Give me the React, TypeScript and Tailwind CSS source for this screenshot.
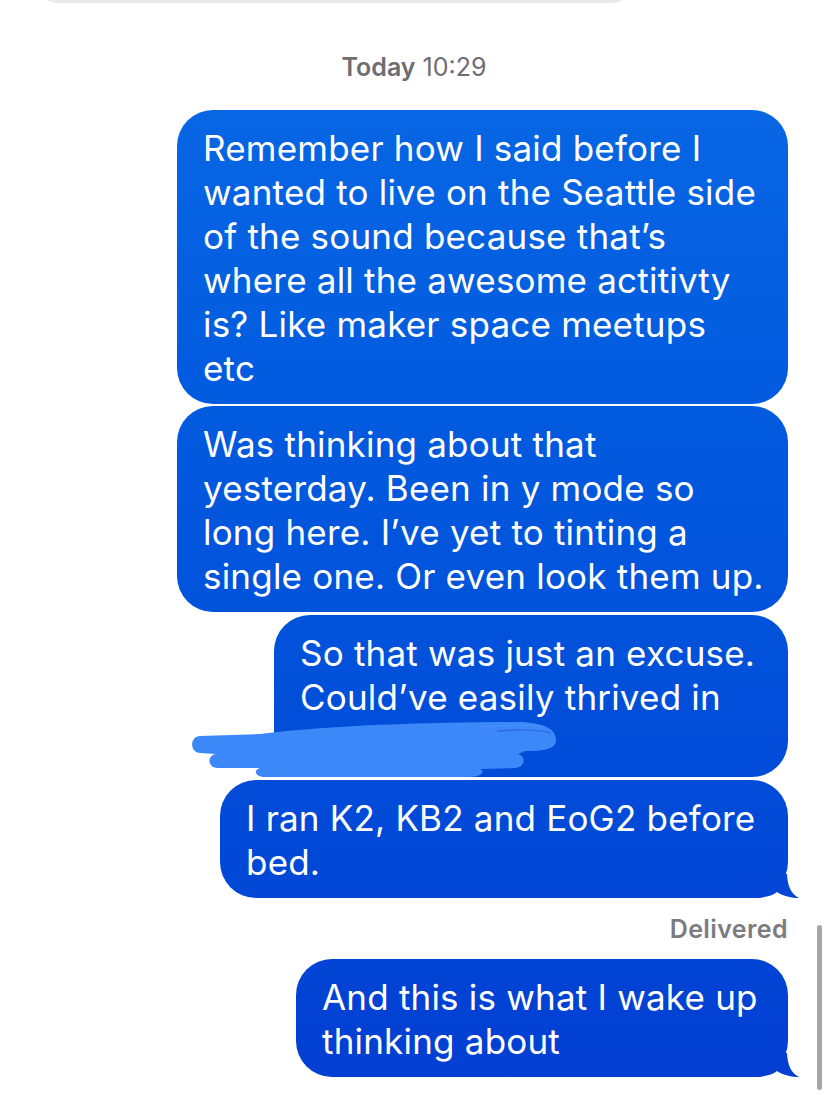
import React from "react";

const bubble =
  "relative rounded-[36px] bg-fixed bg-linear-to-b from-[#0a6ae6] to-[#033ed2] px-[26px] pt-4 pb-[14px] text-[35px] leading-[44px] tracking-[0.2px] text-white whitespace-nowrap";

function Tail({ color }: { color: string }) {
  return (
    <svg
      className="absolute right-[-12px] bottom-0 h-[24px] w-[48px]"
      viewBox="0 0 48 24"
    >
      <path
        d="M0 0 H35 C35.5 12 39 20 47 24 C40 24 31 22 25 18 C20 22 12 24 0 24 Z"
        fill={color}
      />
    </svg>
  );
}

// hand-drawn redaction over the last line
function Scribble() {
  return (
    <svg
      className="absolute left-[-94px] top-[100px] h-[70px] w-[380px]"
      viewBox="0 0 380 70"
    >
      <path
        d="M20 21 L80 19 C150 10 260 7 340 7 C368 8 376 16 376 25 C376 33 368 36 345 36 L338 39 C346 41 346 52 335 53 L300 54 C306 56 301 62 290 62 L85 62 C75 62 73 55 80 53 L38 53 C27 53 27 40 36 39 L20 38 C10 38 9 22 20 21 Z"
        fill="#3d88f9"
      />
      <path
        d="M318 16 C340 14 362 15 370 18"
        fill="none"
        stroke="#2b6ee2"
        strokeWidth="1.4"
        strokeLinecap="round"
      />
      <path
        d="M300 12 C330 10 352 10 362 12"
        fill="none"
        stroke="#4b93fb"
        strokeWidth="1"
        strokeLinecap="round"
      />
    </svg>
  );
}

export default function App() {
  return (
    <div className="relative h-[1095px] overflow-hidden bg-white font-['Inter','Noto_Sans',sans-serif]">
      {/* received bubble cut off at the top */}
      <div className="ml-[38px] -mt-[37px] h-[40px] w-[594px] rounded-[36px] bg-[#e9e9eb]" />

      <div className="mt-[50px] text-center text-[25px] leading-[28px] text-[#6d6d72]">
        <span className="font-semibold">Today</span> 10:29
      </div>

      <div className="mt-[29px] flex flex-col items-end pr-[40px]">
        <div className={`${bubble} w-[611px]`}>
          Remember how I said before I<br />
          wanted to live on the Seattle side
          <br />
          of the sound because that’s
          <br />
          where all the awesome actitivty
          <br />
          is? Like maker space meetups
          <br />
          etc
        </div>

        <div className={`${bubble} mt-[2px] w-[611px]`}>
          Was thinking about that
          <br />
          yesterday. Been in y mode so
          <br />
          long here. I’ve yet to tinting a
          <br />
          single one. Or even look them up.
        </div>

        <div className={`${bubble} mt-[3px] w-[514px]`}>
          So that was just an excuse.
          <br />
          Could’ve easily thrived in
          <br />
          &nbsp;
          <Scribble />
        </div>

        <div className={`${bubble} mt-[3px] w-[568px]`}>
          I ran K2, KB2 and EoG2 before
          <br />
          bed.
          <Tail color="#0446d6" />
        </div>

        <div className="mt-[18px] text-[25px] leading-[26px] font-semibold tracking-[0.4px] text-[#7c7c80]">
          Delivered
        </div>

        <div className={`${bubble} mt-[17px] w-[492px]`}>
          And this is what I wake up
          <br />
          thinking about
          <Tail color="#033fd2" />
        </div>
      </div>

      {/* scroll indicator */}
      <div className="absolute right-[6px] top-[925px] h-[165px] w-[5px] rounded-full bg-[#a6a6a6]" />
    </div>
  );
}
